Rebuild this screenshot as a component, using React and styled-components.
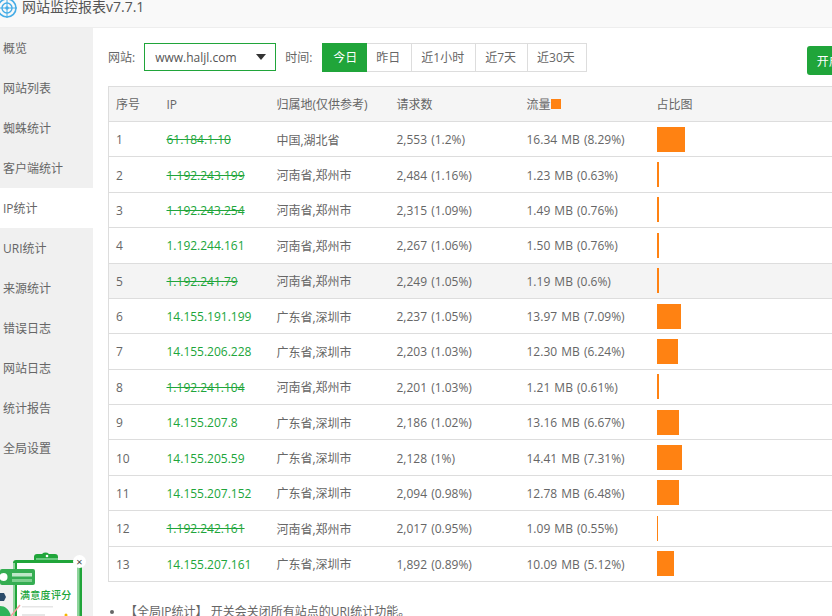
import React from "react";
import styled, { createGlobalStyle } from "styled-components";

const Global = createGlobalStyle`
  html, body { margin: 0; padding: 0; width: 832px; height: 616px; overflow: hidden; background: #fff; }
  body { font-family: "Open Sans", "Noto Sans CJK SC", sans-serif; font-size: 12px; color: #666; }
  * { box-sizing: border-box; }
`;

const Page = styled.div`
  width: 832px;
  height: 616px;
  display: flex;
  flex-direction: column;
  overflow: hidden;
  position: relative;
`;
const Header = styled.header`
  height: 28px;
  flex: none;
  display: flex;
  align-items: flex-start;
  gap: 5px;
  background: #f9f9f9;
  border-bottom: 1px solid #eee;
  overflow: hidden;
`;
const Logo = styled.svg`
  flex: none;
  margin: -2px 0 0 -3px;
`;
const Title = styled.h1`
  margin: -3px 0 0 0;
  font-size: 14px;
  font-weight: 400;
  line-height: 20px;
  color: #555;
`;
const Body = styled.div`
  flex: 1;
  display: flex;
  min-height: 0;
`;
const Side = styled.nav`
  width: 93px;
  flex: none;
  background: #f0f0f0;
`;
const NavItem = styled.div`
  height: 40px;
  line-height: 42px;
  padding-left: 3px;
  font-size: 12px;
  color: #666;
  background: ${(p) => (p.$active ? "#fff" : "transparent")};
`;
const Main = styled.main`
  flex: 1;
  min-width: 0;
  padding: 15px 0 0 15px;
  overflow: hidden;
`;
const Toolbar = styled.div`
  display: flex;
  align-items: flex-start;
  height: 43px;
  width: 800px;
`;
const Label = styled.span`
  line-height: 29px;
  margin-right: 9px;
`;
const Select = styled.div`
  width: 132px;
  height: 28px;
  margin-right: 9px;
  padding: 0 10px;
  display: flex;
  align-items: center;
  justify-content: space-between;
  border: 1px solid #20a53a;
  color: #555;
  font-size: 12px;
`;
const Caret = styled.i`
  width: 0;
  height: 0;
  border-left: 5.5px solid transparent;
  border-right: 5.5px solid transparent;
  border-top: 6px solid #333;
  margin-right: -1px;
`;
const Segments = styled.div`
  display: flex;
  height: 29px;
  margin-left: 1px;
  border: 1px solid #ddd;
`;
const Segment = styled.div`
  padding: ${(p) => (p.$active ? "0 10px 0 11px" : "0 11px 0 9px")};
  color: ${(p) => (p.$active ? "#fff" : "#666")};
  background: ${(p) => (p.$active ? "#20a53a" : "#fff")};
  border-left: ${(p) => (p.$first ? "none" : "1px solid #ddd")};
  margin: ${(p) => (p.$active ? "-1px 0 -1px -1px" : "0")};
  line-height: ${(p) => (p.$active ? "29px" : "27px")};
`;
const OpenButton = styled.button`
  flex: none;
  margin: 3px 0 0 220px;
  width: 70px;
  height: 29px;
  border: none;
  border-radius: 3px;
  background: #20a53a;
  color: #fff;
  font: inherit;
  text-align: left;
  padding-left: 10px;
`;
const Table = styled.table`
  width: 780px;
  table-layout: fixed;
  border-collapse: collapse;
  border: 1px solid #ddd;
`;
const Th = styled.th`
  height: 35px;
  padding: 0 7px;
  text-align: left;
  font-weight: 400;
  background: #f5f5f5;
  border-bottom: 1px solid #ddd;
  width: ${(p) => p.$w || "auto"};
`;
const Row = styled.tr`
  height: 35.38px;
  background: ${(p) => (p.$hl ? "#f4f4f4" : "#fff")};
`;
const Td = styled.td`
  padding: 1px 7px 0;
  border-bottom: 1px solid #ddd;
  word-spacing: 1px;
`;
const BarCell = styled(Td)`
  padding-top: 0;
`;
const Ip = styled.span`
  color: #20a53a;
  text-decoration: ${(p) => (p.$blocked ? "line-through" : "none")};
`;
const Bar = styled.div`
  height: 25px;
  background: #ff8212;
`;
const SortMark = styled.i`
  display: inline-block;
  width: 10px;
  height: 10px;
  background: #ff8212;
`;
const Notes = styled.ul`
  margin: 20px 0 0 0;
  padding: 0 0 0 17px;
  list-style: disc;
  color: #666;
`;
const Widget = styled.div`
  position: absolute;
  left: 0;
  top: 551px;
  width: 90px;
  height: 65px;
`;
const WidgetArt = styled.svg`
  position: absolute;
  inset: 0;
`;
const WidgetTitle = styled.span`
  position: absolute;
  left: 20px;
  top: 37px;
  font-size: 10px;
  line-height: 14px;
  font-weight: 500;
  letter-spacing: 0.3px;
  color: #20a53a;
  white-space: nowrap;
`;
const Close = styled.span`
  position: absolute;
  left: 73px;
  top: 3.5px;
  width: 13px;
  height: 13px;
  border-radius: 50%;
  background: #fff;
  color: #444;
  font-size: 11px;
  line-height: 13px;
  text-align: center;
`;

const nav = ["概览", "网站列表", "蜘蛛统计", "客户端统计", "IP统计", "URI统计", "来源统计", "错误日志", "网站日志", "统计报告", "全局设置"];
const ranges = ["今日", "昨日", "近1小时", "近7天", "近30天"];
const HN = "河南省,郑州市";
const GD = "广东省,深圳市";
const rows = [
  ["61.184.1.10", 1, "中国,湖北省", "2,553 (1.2%)", "16.34 MB (8.29%)", 28],
  ["1.192.243.199", 1, HN, "2,484 (1.16%)", "1.23 MB (0.63%)", 2],
  ["1.192.243.254", 1, HN, "2,315 (1.09%)", "1.49 MB (0.76%)", 2],
  ["1.192.244.161", 0, HN, "2,267 (1.06%)", "1.50 MB (0.76%)", 2],
  ["1.192.241.79", 1, HN, "2,249 (1.05%)", "1.19 MB (0.6%)", 2],
  ["14.155.191.199", 0, GD, "2,237 (1.05%)", "13.97 MB (7.09%)", 24],
  ["14.155.206.228", 0, GD, "2,203 (1.03%)", "12.30 MB (6.24%)", 21],
  ["1.192.241.104", 1, HN, "2,201 (1.03%)", "1.21 MB (0.61%)", 2],
  ["14.155.207.8", 0, GD, "2,186 (1.02%)", "13.16 MB (6.67%)", 22],
  ["14.155.205.59", 0, GD, "2,128 (1%)", "14.41 MB (7.31%)", 25],
  ["14.155.207.152", 0, GD, "2,094 (0.98%)", "12.78 MB (6.48%)", 22],
  ["1.192.242.161", 1, HN, "2,017 (0.95%)", "1.09 MB (0.55%)", 1],
  ["14.155.207.161", 0, GD, "1,892 (0.89%)", "10.09 MB (5.12%)", 17],
];

export default function App() {
  return (
    <Page>
      <Global />
      <Header>
        <Logo width="20" height="20" viewBox="0 0 20 20" fill="none" stroke="#45ace6">
          <circle cx="10" cy="10" r="9" strokeWidth="1.6" />
          <circle cx="10" cy="10" r="5" strokeWidth="1.4" />
          <circle cx="10" cy="10" r="1.8" fill="#45ace6" stroke="none" />
          <path d="M10 0v20M0 10h20" strokeWidth="1" />
        </Logo>
        <Title>网站监控报表v7.7.1</Title>
      </Header>
      <Body>
        <Side>
          {nav.map((n) => (
            <NavItem key={n} $active={n === "IP统计"}>{n}</NavItem>
          ))}
        </Side>
        <Main>
          <Toolbar>
            <Label>网站:</Label>
            <Select>www.haljl.com<Caret /></Select>
            <Label>时间:</Label>
            <Segments>
              {ranges.map((r, i) => (
                <Segment key={r} $active={i === 0} $first={i < 2}>{r}</Segment>
              ))}
            </Segments>
            <OpenButton>开启监控</OpenButton>
          </Toolbar>
          <Table>
            <thead>
              <tr>
                <Th $w="51px">序号</Th>
                <Th $w="110px">IP</Th>
                <Th $w="120px">归属地(仅供参考)</Th>
                <Th $w="130px">请求数</Th>
                <Th $w="130px">流量<SortMark /></Th>
                <Th>占比图</Th>
              </tr>
            </thead>
            <tbody>
              {rows.map(([ip, blocked, place, req, flow, bar], i) => (
                <Row key={ip} $hl={i === 4}>
                  <Td>{i + 1}</Td>
                  <Td><Ip $blocked={!!blocked}>{ip}</Ip></Td>
                  <Td>{place}</Td>
                  <Td>{req}</Td>
                  <Td>{flow}</Td>
                  <BarCell><Bar style={{ width: bar }} /></BarCell>
                </Row>
              ))}
            </tbody>
          </Table>
          <Notes>
            <li>【全局IP统计】 开关会关闭所有站点的URI统计功能。</li>
          </Notes>
        </Main>
      </Body>
      <Widget>
        <WidgetArt width="90" height="65" viewBox="0 0 90 65">
          <path d="M13 65V12a3 3 0 0 1 3-3h18V6a3 3 0 0 1 3-3h5a5 5 0 0 1 7 0h6a3 3 0 0 1 3 3v3h21a3 3 0 0 1 3 3v53z" fill="#20a53a" />
          <rect x="17" y="12" width="60" height="53" fill="#fff" />
          <rect x="77" y="12" width="2.5" height="53" fill="#8fd49c" />
          <rect x="13" y="12" width="2" height="53" fill="#8fd49c" />
          <circle cx="47" cy="5" r="1.3" fill="#fff" />
          <rect x="36" y="7" width="22" height="2" fill="#6cc981" />
          <rect x="0" y="18" width="35" height="16" rx="2" fill="#35ad52" />
          <circle cx="3.5" cy="26" r="4" fill="#fff" />
          <rect x="12" y="22" width="20" height="3.5" fill="#bfe8c8" />
          <rect x="12" y="28" width="20" height="3" fill="#7ed08f" />
          <rect x="22" y="55" width="31" height="1.5" fill="#e6e6e6" />
          <rect x="22" y="63" width="23" height="2" fill="#e6e6e6" />
          <path d="M0 65V55c5 0 9 3 11 10z" fill="#2fb45a" />
          <path d="M0 42h4l2 4-2 4H0z" fill="#2a4a6a" />
          <path d="M11 65l9-11" stroke="#f5a0a0" strokeWidth="1.5" />
          <circle cx="66" cy="64" r="1.5" fill="#f5b800" />
        </WidgetArt>
        <WidgetTitle>满意度评分</WidgetTitle>
        <Close>×</Close>
      </Widget>
    </Page>
  );
}
